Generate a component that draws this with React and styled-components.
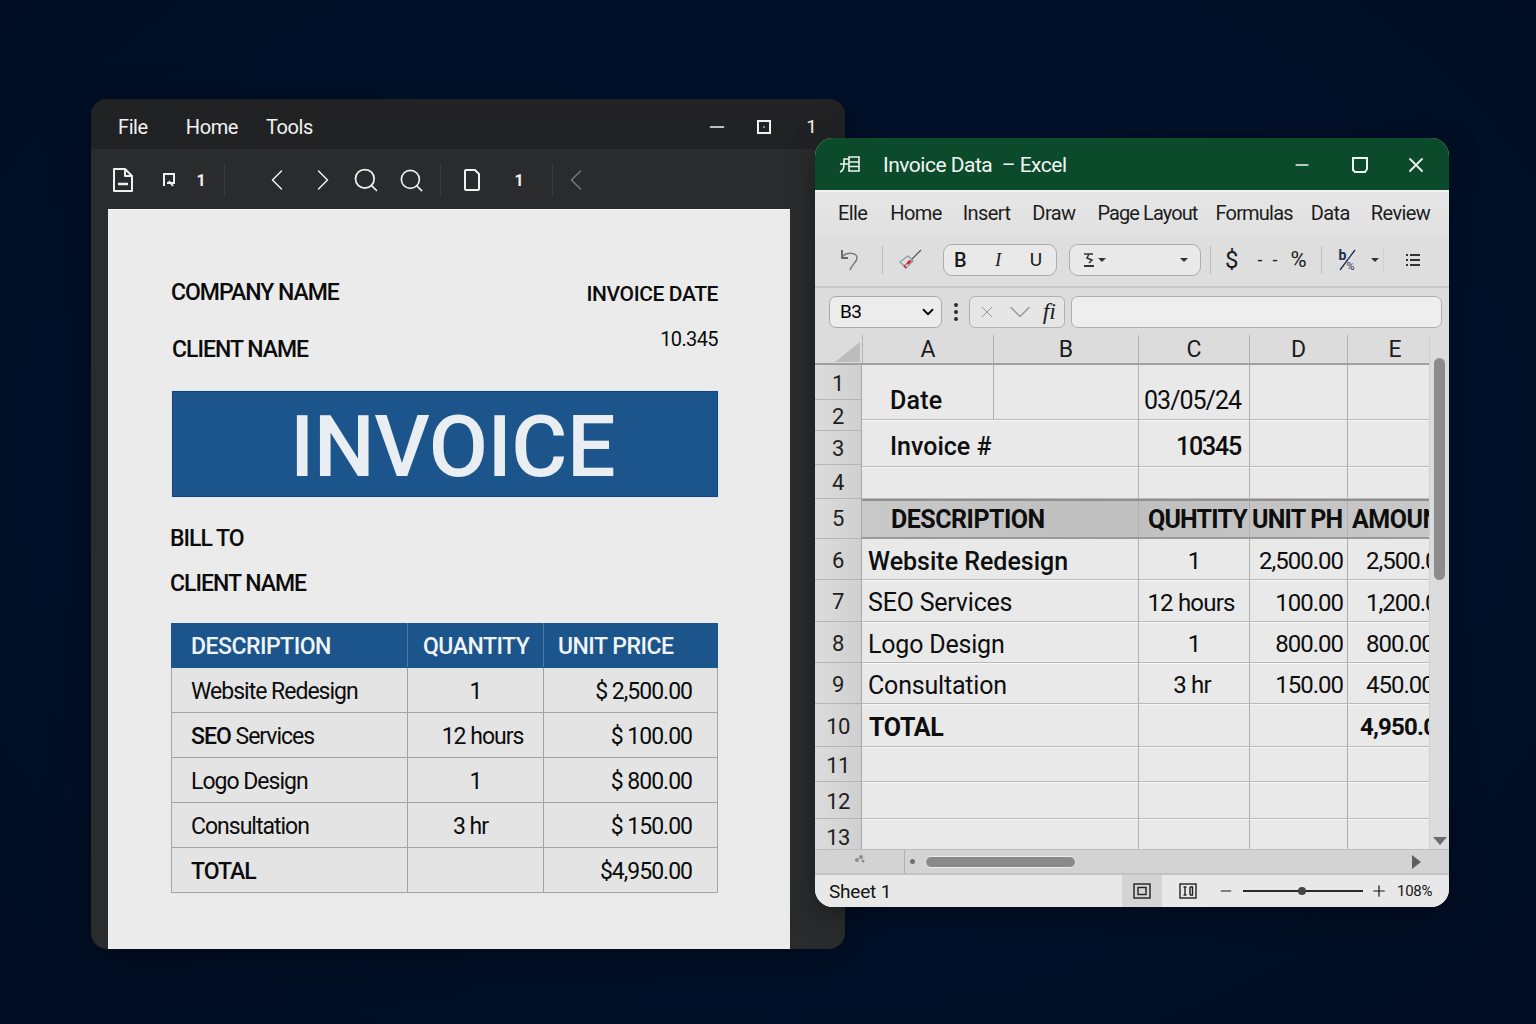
import React from "react";
import styled, { createGlobalStyle } from "styled-components";
import { ChevronLeft, ChevronRight, ChevronDown, Search, X, Minus, Plus } from "lucide-react";

const GlobalStyle = createGlobalStyle`
  html, body { margin: 0; padding: 0; background: #010f27; }
  * { box-sizing: border-box; }
  body { font-family: Roboto, "Noto Sans", sans-serif; }
`;

const Desktop = styled.div`
  position: relative;
  width: 1536px;
  height: 1024px;
  overflow: hidden;
  background: radial-gradient(ellipse at 50% 45%, #02122e 0%, #011029 60%, #000d22 100%);
`;

/* PDF viewer window */
const PdfWindow = styled.section`
  position: absolute;
  left: 91px;
  top: 99px;
  width: 754px;
  height: 850px;
  display: flex;
  flex-direction: column;
  background: #2a2b2d;
  border-radius: 16px;
  overflow: hidden;
  box-shadow: 0 10px 40px rgba(0, 0, 0, 0.35);
`;

const PdfTitleBar = styled.header`
  height: 50px;
  flex: none;
  display: flex;
  align-items: center;
  padding: 5px 28px 0 27px;
  background: #212224;
  color: #f2f2f2;
`;

const PdfMenu = styled.span`
  font-size: 20px;
  letter-spacing: -0.4px;
  margin-right: ${(p) => p.$gap}px;
`;

const Spacer = styled.div`
  flex: ${(p) => (p.$w ? "none" : 1)};
  width: ${(p) => (p.$w ? `${p.$w}px` : "auto")};
`;

const WindowControls = styled.div`
  display: flex;
  align-items: center;
  gap: ${(p) => p.$gap}px;
  color: #f2f2f2;
  font-size: 19px;
`;

const PdfToolbar = styled.div`
  height: 60px;
  flex: none;
  display: flex;
  align-items: center;
  padding: 2px 0 0 20px;
  color: #f0f0f0;
  font-size: 16px;
  font-weight: 700;
`;

const ToolSlot = styled.span`
  display: inline-flex;
  align-items: center;
  justify-content: center;
  flex: none;
  width: ${(p) => p.$w}px;
  margin-left: ${(p) => p.$ml || 0}px;
  color: ${(p) => p.$color || "inherit"};
  & > svg { flex: none; }
`;

const ToolDivider = styled.span`
  width: 1px;
  height: 30px;
  flex: none;
  margin-left: ${(p) => p.$ml || 0}px;
  background: #3b3c3e;
`;

const DocSheet = styled.main`
  flex: 1;
  margin: 0 55px 0 17px;
  padding: 69px 72px 0 63px;
  background: #ebebeb;
  color: #0c0c0c;
  border-top: 1px solid #f7f7f7;
`;

const DocHeader = styled.div`
  display: flex;
  justify-content: space-between;
  height: 112px;
`;

const DocColumn = styled.div`
  display: flex;
  flex-direction: column;
  align-items: ${(p) => (p.$right ? "flex-end" : "flex-start")};
`;

const DocLabel = styled.div`
  font-size: ${(p) => p.$size || 23}px;
  font-weight: ${(p) => p.$weight || 500};
  line-height: 28px;
  letter-spacing: ${(p) => p.$track ?? -1}px;
  margin-top: ${(p) => p.$top || 0}px;
  margin-left: ${(p) => p.$left || 0}px;
  white-space: nowrap;
`;

const InvoiceBanner = styled.div`
  height: 106px;
  margin-left: 1px;
  display: flex;
  align-items: center;
  justify-content: center;
  padding: 4px 0 0 15px;
  background: #1c548c;
  border: 1px solid #15457a;
  box-shadow: 0 0 0 1px #dfe6ec;
  color: #e8eef1;
  font-size: 86px;
  font-weight: 500;
  letter-spacing: -0.5px;
`;

const BillBlock = styled.div`
  margin: 28px 0 25px -1px;
  display: flex;
  flex-direction: column;
  gap: 17px;
`;

const InvoiceTable = styled.table`
  width: 546px;
  border-collapse: collapse;
  table-layout: fixed;
  font-size: 23px;
  letter-spacing: -0.5px;
`;

const HeadCell = styled.th`
  height: 44px;
  padding: 2px ${(p) => p.$pr || 0}px 0 ${(p) => p.$pl || 0}px;
  text-align: left;
  background: #1c548c;
  color: #f0f4f7;
  font-weight: 500;
  border: 1px solid #4d78a3;
  border-top-color: #1c548c;
  border-left-color: #1c548c;
  border-bottom-color: #1c548c;
  &:last-child { border-right-color: #1c548c; }
`;

const BodyCell = styled.td`
  height: 45px;
  padding: 2px ${(p) => p.$pr || 0}px 0 ${(p) => p.$pl || 0}px;
  text-align: ${(p) => p.$align || "left"};
  font-weight: ${(p) => p.$weight || 400};
  letter-spacing: -1px;
  background: #e4e4e4;
  border: 1px solid #a4a4a4;
  white-space: nowrap;
`;

const Strong = styled.span`
  font-weight: 500;
`;

/* Excel window */
const ExcelWindow = styled.section`
  position: absolute;
  left: 815px;
  top: 138px;
  width: 634px;
  height: 769px;
  display: flex;
  flex-direction: column;
  background: #e2e2e2;
  border-radius: 18px;
  overflow: hidden;
  box-shadow: 0 8px 30px rgba(0, 0, 0, 0.35);
`;

const ExcelTitleBar = styled.header`
  height: 52px;
  flex: none;
  display: flex;
  align-items: center;
  padding: 1px 21px 0 24px;
  background: #0c4a2c;
  color: #f1f6f3;
  font-size: 21px;
  letter-spacing: -0.5px;
`;

const ExcelTitle = styled.span`
  margin-left: 22px;
  white-space: pre;
`;

const ExcelMenu = styled.nav`
  height: 48px;
  flex: none;
  display: flex;
  align-items: center;
  padding: 0 0 4px 23px;
  background: linear-gradient(#e6e6e6, #e0e0e0);
  border-top: 2px solid #f2f2f2;
  color: #1c1c1c;
  font-size: 20px;
  letter-spacing: -0.6px;
  white-space: nowrap;
`;

const ExcelMenuItem = styled.span`
  margin-right: ${(p) => p.$gap}px;
  letter-spacing: ${(p) => p.$track ?? -0.6}px;
`;

const ExcelToolbar = styled.div`
  height: 50px;
  flex: none;
  display: flex;
  align-items: center;
  padding-bottom: 5px;
  background: #dedede;
  border-bottom: 2px solid #c9c9c9;
  color: #1c1c1c;
`;

const PillGroup = styled.div`
  width: ${(p) => p.$w}px;
  height: 32px;
  flex: none;
  display: flex;
  align-items: center;
  justify-content: space-between;
  padding: 0 ${(p) => p.$padR}px 0 ${(p) => p.$padL}px;
  background: #e9e9e9;
  border: 1px solid #adadad;
  border-radius: 9px;
  font-size: 19px;
`;

const Glyph = styled.span`
  font-size: ${(p) => p.$size || 18}px;
  font-weight: ${(p) => p.$weight || 400};
  font-style: ${(p) => (p.$italic ? "italic" : "normal")};
  font-family: ${(p) => (p.$serif ? '"Liberation Serif", serif' : "inherit")};
  color: ${(p) => p.$color || "inherit"};
  margin: ${(p) => p.$margin || 0};
`;

const Caret = styled.span`
  width: 0;
  height: 0;
  flex: none;
  margin: ${(p) => p.$margin || 0};
  border-left: 4px solid transparent;
  border-right: 4px solid transparent;
  border-top: 4px solid #333;
`;

const ToolRule = styled.span`
  width: 1px;
  height: 28px;
  flex: none;
  background: ${(p) => p.$color || "#bdbdbd"};
  margin: ${(p) => p.$margin || "0"};
`;

const FormulaBar = styled.div`
  height: 47px;
  flex: none;
  display: flex;
  align-items: center;
  padding: 0 7px 0 14px;
  background: #dcdcdc;
`;

const NameBox = styled.div`
  width: 113px;
  height: 32px;
  flex: none;
  display: flex;
  align-items: center;
  justify-content: space-between;
  padding: 0 4px 0 10px;
  background: #ececec;
  border: 1px solid #a9a9a9;
  border-radius: 7px;
  font-size: 19px;
  letter-spacing: -0.5px;
`;

const Dots = styled.div`
  width: 27px;
  flex: none;
  display: flex;
  flex-direction: column;
  align-items: center;
  gap: 3px;
  & > i {
    width: 4px;
    height: 4px;
    border-radius: 50%;
    background: #2c2c2c;
  }
`;

const FormulaTools = styled.div`
  width: 96px;
  height: 32px;
  flex: none;
  display: flex;
  align-items: center;
  justify-content: space-between;
  padding: 0 8px 0 7px;
  background: #e6e6e6;
  border: 1px solid #b1b1b1;
  border-radius: 6px;
  color: #9a9a9a;
`;

const FormulaInput = styled.div`
  flex: 1;
  height: 32px;
  margin-left: 6px;
  background: #eeeeee;
  border: 1px solid #aeaeae;
  border-radius: 7px;
`;

const SheetArea = styled.div`
  flex: 1;
  min-height: 0;
  display: flex;
  overflow: hidden;
`;

const SheetMain = styled.div`
  width: 614px;
  flex: none;
  display: flex;
  flex-direction: column;
`;

const ColumnHeader = styled.div`
  height: 30px;
  flex: none;
  display: grid;
  grid-template-columns: 47px 131px 145px 111px 98px 82px;
  background: #dcdcdc;
  border-bottom: 2px solid #a0a0a0;
  font-size: 23px;
  line-height: 1;
  color: #1c1c1c;
`;

const ColumnLabel = styled.div`
  display: flex;
  align-items: center;
  justify-content: center;
  padding: 1px 0 0 ${(p) => p.$pl || 0}px;
  border-left: 1px solid #b2b2b2;
`;

const Corner = styled.div`
  display: flex;
  align-items: flex-end;
  justify-content: flex-end;
  padding: 0 1px 1px 0;
`;

const SheetBody = styled.div`
  flex: 1;
  min-height: 0;
  display: flex;
  overflow: hidden;
`;

const RowHeaders = styled.div`
  width: 47px;
  flex: none;
  display: flex;
  flex-direction: column;
  background: linear-gradient(90deg, #dcdcdc, #cfcfcf);
  border-right: 1px solid #a9a9a9;
`;

const RowHeader = styled.div`
  height: ${(p) => p.$h}px;
  flex: none;
  display: flex;
  align-items: center;
  justify-content: center;
  padding-top: ${(p) => p.$nudge}px;
  font-size: 22px;
  line-height: 1;
  letter-spacing: -0.6px;
  color: #1f1f1f;
  border-bottom: 1px solid #b5b5b5;
  &:last-child { border-bottom: 0; }
`;

const Cells = styled.div`
  flex: 1;
  min-width: 0;
  display: flex;
  flex-direction: column;
  background: #e9e9e9;
  overflow: hidden;
`;

const Row = styled.div`
  height: ${(p) => p.$h}px;
  flex: none;
  display: grid;
  grid-template-columns: 277px 111px 98px 81px;
  background: ${(p) => (p.$head ? "linear-gradient(90deg, #c9c9c9, #bfbfbf 40%, #c8c8c8)" : "none")};
  border-top: ${(p) => (p.$head ? "2px solid #8f8f8f" : "0")};
  border-bottom: ${(p) => (p.$head ? "2px solid #9a9a9a" : p.$last ? "0" : "1px solid #b9b9b9")};
  box-shadow: ${(p) => (p.$head || p.$last ? "none" : "0 1px 0 #f7f7f7")};
`;

const Cell = styled.div`
  display: flex;
  align-items: center;
  justify-content: ${(p) => p.$justify || "flex-start"};
  min-width: 0;
  overflow: hidden;
  white-space: nowrap;
  padding: ${(p) => p.$nudge || 0}px ${(p) => p.$pr || 0}px 0 ${(p) => p.$pl || 0}px;
  font-size: ${(p) => p.$size || 25}px;
  font-weight: ${(p) => p.$weight || 400};
  letter-spacing: ${(p) => p.$track ?? -0.3}px;
  color: #0e0e0e;
  border-right: 1px solid #b0b0b0;
  &:last-child { border-right: 0; }
`;

const DateSplit = styled.div`
  display: grid;
  grid-template-columns: 132px 145px;
  & > div:last-child { border-right: 1px solid #b0b0b0; }
`;

const VerticalScroll = styled.aside`
  width: 20px;
  flex: none;
  position: relative;
  background: #dcdcdc;
  border-left: 1px solid #cfcfcf;
`;

const ScrollThumb = styled.div`
  position: absolute;
  left: 4px;
  top: 23px;
  width: 11px;
  height: 222px;
  border-radius: 6px;
  background: #8c8c8c;
`;

const ScrollDown = styled.div`
  position: absolute;
  left: 3px;
  bottom: 4px;
  width: 0;
  height: 0;
  border-left: 7px solid transparent;
  border-right: 7px solid transparent;
  border-top: 8px solid #6c6c6c;
`;

const HorizontalScroll = styled.div`
  height: 26px;
  flex: none;
  display: flex;
  align-items: center;
  background: #d3d3d3;
  border-top: 1px solid #bdbdbd;
  border-bottom: 2px solid #c2c2c2;
`;

const SheetTabHandle = styled.div`
  width: 90px;
  height: 100%;
  flex: none;
  display: flex;
  align-items: center;
  justify-content: center;
  padding-bottom: 5px;
  border-right: 1px solid #b0b0b0;
`;

const ScrollDot = styled.span`
  width: 5px;
  height: 5px;
  margin: 0 10px 0 5px;
  flex: none;
  border-radius: 50%;
  background: #717171;
`;

const HThumb = styled.div`
  width: 151px;
  height: 12px;
  flex: none;
  border-radius: 6px;
  background: #8a8a8a;
  border: 1px solid #ececec;
`;

const ScrollRight = styled.div`
  width: 0;
  height: 0;
  margin-right: 28px;
  border-top: 7px solid transparent;
  border-bottom: 7px solid transparent;
  border-left: 9px solid #5e5e5e;
`;

const StatusBar = styled.footer`
  height: 32px;
  flex: none;
  display: flex;
  align-items: center;
  padding: 0 15px 0 14px;
  background: #e8e8e8;
  color: #151515;
`;

const SheetName = styled.span`
  font-size: 19px;
  letter-spacing: -0.2px;
`;

const ViewButton = styled.div`
  width: 40px;
  height: 100%;
  flex: none;
  display: flex;
  align-items: center;
  justify-content: center;
  margin-right: ${(p) => p.$mr || 0}px;
  background: ${(p) => (p.$active ? "#d4d4d4" : "transparent")};
`;

const ZoomTrack = styled.div`
  position: relative;
  width: 120px;
  height: 2px;
  margin: 0 7px 0 9px;
  flex: none;
  background: #2a2a2a;
`;

const ZoomKnob = styled.span`
  position: absolute;
  left: 55px;
  top: -3px;
  width: 8px;
  height: 8px;
  border-radius: 50%;
  background: #444;
`;

const ZoomValue = styled.span`
  width: 37px;
  flex: none;
  margin-left: 9px;
  font-size: 15px;
  letter-spacing: -0.3px;
  white-space: nowrap;
`;

const OneLabel = styled.span`
  margin-left: 6px;
`;

const FractionMark = styled.span`
  position: relative;
  width: 20px;
  height: 24px;
  flex: none;
  color: #1d2d52;
  line-height: 1;
`;

const FractionBase = styled.span`
  position: absolute;
  left: ${(p) => p.$x}px;
  top: ${(p) => p.$y}px;
  font-size: ${(p) => p.$size}px;
  font-weight: ${(p) => p.$weight || 400};
`;

const DocIcon = () => (
  <svg width="24" height="26" viewBox="0 0 24 26" fill="none" stroke="#f0f0f0" strokeWidth="2" strokeLinejoin="round">
    <path d="M3 2h11l7 7v15H3z" />
    <path d="M14 2v7h7" />
    <path d="M7 17h10" strokeWidth="2.4" />
  </svg>
);

const SmallMark = () => (
  <svg width="14" height="16" viewBox="0 0 14 16" fill="none" stroke="#f0f0f0" strokeWidth="2">
    <path d="M2 14V2h10v9H5" />
    <path d="M7 9l4 5" />
  </svg>
);

const PageIcon = () => (
  <svg width="18" height="24" viewBox="0 0 18 24" fill="none" stroke="#f0f0f0" strokeWidth="2" strokeLinejoin="round">
    <path d="M2 3a1 1 0 0 1 1-1h9l4 4v15a1 1 0 0 1-1 1H3a1 1 0 0 1-1-1z" />
  </svg>
);

const RestoreIcon = () => (
  <svg width="14" height="16" viewBox="0 0 14 16" fill="none" stroke="#f0f0f0" strokeWidth="2">
    <rect x="1" y="2" width="12" height="12" />
    <path d="M7 7v2" strokeWidth="1" />
  </svg>
);

const SheetIcon = () => (
  <svg width="22" height="20" viewBox="0 0 22 20" fill="none" stroke="#eef4f0" strokeWidth="1.6">
    <path d="M1 17c3-1 4-4 4-8V4h5" />
    <path d="M1 9h9" />
    <path d="M10 2h10v14H10z" />
    <path d="M10 7h10M10 11.500h10" />
  </svg>
);

const MaxIcon = () => (
  <svg width="16" height="18" viewBox="0 0 16 18" fill="none" stroke="#f1f6f3" strokeWidth="2">
    <path d="M1 2h14v11l-2 3H3l-2-2z" />
  </svg>
);

const UndoIcon = () => (
  <svg width="22" height="24" viewBox="0 0 22 24" fill="none" stroke="#444" strokeWidth="1.5">
    <path d="M3 2v8h6" />
    <path d="M3 9c4-5 15-5 15 1 0 4-5 6-7 12" stroke="#777" />
  </svg>
);

const BrushIcon = () => (
  <svg width="24" height="22" viewBox="0 0 24 22" fill="none">
    <path d="M13 11L23 1" stroke="#555" strokeWidth="1.2" />
    <path d="M2 13l8-6 5 5-7 7z" stroke="#8da3a8" strokeWidth="1.4" />
    <path d="M7 16l4-5 3 1-3 3z" fill="#d3232e" />
    <path d="M8 19l-2-3" stroke="#d3232e" strokeWidth="1.6" />
  </svg>
);

const FontColorIcon = () => (
  <svg width="14" height="16" viewBox="0 0 14 16" fill="none" stroke="#333" strokeWidth="1.5">
    <path d="M2 2h9M7 2l-2 4 5 2-3 3" />
    <path d="M2 14h10" strokeWidth="2" />
  </svg>
);

const FractionSlash = () => (
  <svg width="20" height="24" viewBox="0 0 20 24" stroke="#1d2d52" strokeWidth="1.3">
    <path d="M2 22L17 2" />
  </svg>
);

const ListIcon = () => (
  <svg width="16" height="16" viewBox="0 0 16 16" stroke="#333" strokeWidth="2" fill="none">
    <path d="M5 3h10M5 8h10M5 13h10" />
    <path d="M1 3h2M1 8h2M1 13h2" strokeWidth="2" />
  </svg>
);

const CornerMark = () => (
  <svg width="26" height="20" viewBox="0 0 26 20">
    <path d="M25 0v20H0z" fill="#bcbcbc" />
  </svg>
);

const NormalViewIcon = () => (
  <svg width="18" height="16" viewBox="0 0 18 16" fill="none" stroke="#222" strokeWidth="1.4">
    <rect x="1" y="1" width="16" height="14" />
    <rect x="5" y="4.500" width="8" height="7" />
  </svg>
);

const PageViewIcon = () => (
  <svg width="18" height="16" viewBox="0 0 18 16" fill="none" stroke="#222" strokeWidth="1.4">
    <rect x="1" y="1" width="16" height="14" />
    <path d="M6 4v8M4.500 4h3M4.500 12h3M11 4v8M11 4h2.500v8H11" />
  </svg>
);

const SmudgeIcon = () => (
  <svg width="12" height="10" viewBox="0 0 12 10" fill="#8a8a8a">
    <circle cx="3" cy="6" r="2" />
    <circle cx="7" cy="3" r="2" />
    <circle cx="9" cy="7" r="1.500" />
  </svg>
);

const tableRows = [
  { name: "Website Redesign", qty: "1", price: "$ 2,500.00" },
  { name: <><Strong>SEO</Strong> Services</>, qty: "12 hours", qtyLeft: 14, price: "$ 100.00" },
  { name: "Logo Design", qty: "1", price: "$ 800.00" },
  { name: "Consultation", qty: "3 hr", qtyRight: 10, price: "$ 150.00" },
  { name: "TOTAL", qty: "", price: "$4,950.00", total: true },
];

const rowNumbers = [
  [1, 35, 3], [2, 31, 3], [3, 34, 3], [4, 34, 3], [5, 40, 0], [6, 41, 3], [7, 42, 3],
  [8, 41, 3], [9, 41, 3], [10, 43, 3], [11, 35, 3], [12, 37, 3], [13, 30, 7],
];

const sheetRows = [
  { h: 41, a: "Website Redesign", b: "1", c: "2,500.00", d: "2,500.00", bold: true },
  { h: 42, a: "SEO Services", b: "12 hours", bRight: 6, c: "100.00", d: "1,200.00" },
  { h: 41, a: "Logo Design", b: "1", c: "800.00", d: "800.00" },
  { h: 41, a: "Consultation", b: "3 hr", bRight: 4, c: "150.00", d: "450.00" },
];

const menuItems = [
  { label: "Elle", gap: 23 },
  { label: "Home", gap: 21 },
  { label: "Insert", gap: 22 },
  { label: "Draw", gap: 22 },
  { label: "Page Layout", gap: 18, track: -0.9 },
  { label: "Formulas", gap: 18, track: -0.8 },
  { label: "Data", gap: 21 },
  { label: "Review", gap: 0 },
];

const BlankRow = ({ h, last }) => (
  <Row $h={h} $last={last}>
    <Cell /><Cell /><Cell /><Cell />
  </Row>
);

export default function App() {
  return (
    <Desktop>
      <GlobalStyle />

      <PdfWindow>
        <PdfTitleBar>
          <PdfMenu $gap={38}>File</PdfMenu>
          <PdfMenu $gap={28}>Home</PdfMenu>
          <PdfMenu $gap={0}>Tools</PdfMenu>
          <Spacer />
          <WindowControls $gap={29}>
            <Minus size={22} strokeWidth={1.9} />
            <RestoreIcon />
            <OneLabel>1</OneLabel>
          </WindowControls>
        </PdfTitleBar>

        <PdfToolbar>
          <ToolSlot $w={24}><DocIcon /></ToolSlot>
          <ToolSlot $w={20} $ml={24}><SmallMark /></ToolSlot>
          <ToolSlot $w={14} $ml={15}>1</ToolSlot>
          <ToolDivider $ml={16} />
          <ToolSlot $w={24} $ml={40}><ChevronLeft size={36} strokeWidth={1} /></ToolSlot>
          <ToolSlot $w={24} $ml={22}><ChevronRight size={36} strokeWidth={1} /></ToolSlot>
          <ToolSlot $w={26} $ml={18}><Search size={28} strokeWidth={1.5} /></ToolSlot>
          <ToolSlot $w={24} $ml={20}><Search size={27} strokeWidth={1.5} /></ToolSlot>
          <ToolDivider $ml={17} />
          <ToolSlot $w={18} $ml={22}><PageIcon /></ToolSlot>
          <ToolSlot $w={14} $ml={31}>1</ToolSlot>
          <ToolDivider $ml={26} />
          <ToolSlot $w={24} $ml={11} $color="#77787a"><ChevronLeft size={36} strokeWidth={1} /></ToolSlot>
        </PdfToolbar>

        <DocSheet>
          <DocHeader>
            <DocColumn>
              <DocLabel>COMPANY NAME</DocLabel>
              <DocLabel $top={29} $left={1}>CLIENT NAME</DocLabel>
            </DocColumn>
            <DocColumn $right>
              <DocLabel $size={21} $top={1} $track={-0.4}>INVOICE DATE</DocLabel>
              <DocLabel $size={20} $weight={400} $top={17} $track={-0.6}>10.345</DocLabel>
            </DocColumn>
          </DocHeader>

          <InvoiceBanner>INVOICE</InvoiceBanner>

          <BillBlock>
            <DocLabel>BILL TO</DocLabel>
            <DocLabel>CLIENT NAME</DocLabel>
          </BillBlock>

          <InvoiceTable>
            <colgroup>
              <col style={{ width: 236 }} />
              <col style={{ width: 136 }} />
              <col style={{ width: 174 }} />
            </colgroup>
            <thead>
              <tr>
                <HeadCell $pl={19}>DESCRIPTION</HeadCell>
                <HeadCell $pl={15}>QUANTITY</HeadCell>
                <HeadCell $pl={14}>UNIT PRICE</HeadCell>
              </tr>
            </thead>
            <tbody>
              {tableRows.map((row) => (
                <tr key={row.price}>
                  <BodyCell $pl={19} $weight={row.total ? 500 : 400}>{row.name}</BodyCell>
                  <BodyCell $align="center" $pl={row.qtyLeft} $pr={row.qtyRight}>{row.qty}</BodyCell>
                  <BodyCell $align="right" $pr={25}>{row.price}</BodyCell>
                </tr>
              ))}
            </tbody>
          </InvoiceTable>
        </DocSheet>
      </PdfWindow>

      <ExcelWindow>
        <ExcelTitleBar>
          <SheetIcon />
          <ExcelTitle>Invoice Data  – Excel</ExcelTitle>
          <Spacer />
          <WindowControls $gap={36}>
            <Minus size={20} strokeWidth={2} />
            <ToolSlot $w={16} $ml={4}><MaxIcon /></ToolSlot>
            <X size={24} strokeWidth={1.8} />
          </WindowControls>
        </ExcelTitleBar>

        <ExcelMenu>
          {menuItems.map((item) => (
            <ExcelMenuItem key={item.label} $gap={item.gap} $track={item.track}>{item.label}</ExcelMenuItem>
          ))}
        </ExcelMenu>

        <ExcelToolbar>
          <ToolSlot $w={24} $ml={23}><UndoIcon /></ToolSlot>
          <ToolRule $margin="0 14px 0 20px" />
          <ToolSlot $w={26}><BrushIcon /></ToolSlot>
          <Spacer $w={20} />
          <PillGroup $w={114} $padL={10} $padR={14}>
            <Glyph $size={20} $weight={500}>B</Glyph>
            <Glyph $size={19} $italic $serif>I</Glyph>
            <Glyph $size={19}>U</Glyph>
          </PillGroup>
          <Spacer $w={12} />
          <PillGroup $w={132} $padL={12} $padR={12}>
            <FontColorIcon />
            <Caret $margin="0 0 0 -72px" />
            <Caret />
          </PillGroup>
          <ToolRule $margin="0 14px 0 9px" />
          <Glyph $size={24}>$</Glyph>
          <Glyph $size={18} $margin="0 10px 0 19px">-</Glyph>
          <Glyph $size={18} $margin="0 13px 0 0">-</Glyph>
          <Glyph $size={22}>%</Glyph>
          <ToolRule $margin="0 16px 0 14px" />
          <FractionMark>
            <FractionSlash />
            <FractionBase $x={1} $y={0} $size={14} $weight={700}>b</FractionBase>
            <FractionBase $x={9} $y={13} $size={11}>%</FractionBase>
          </FractionMark>
          <Caret $margin="0 0 0 13px" />
          <ToolRule $margin="0 21px 0 4px" $color="#d2d2d2" />
          <ListIcon />
        </ExcelToolbar>

        <FormulaBar>
          <NameBox>B3 <ChevronDown size={18} strokeWidth={2.4} /></NameBox>
          <Dots><i /><i /><i /></Dots>
          <FormulaTools>
            <X size={20} strokeWidth={1.2} />
            <ChevronDown size={36} strokeWidth={1} style={{ margin: "0 -6px" }} />
            <Glyph $size={24} $italic $serif $color="#222">fi</Glyph>
          </FormulaTools>
          <FormulaInput />
        </FormulaBar>

        <SheetArea>
          <SheetMain>
            <ColumnHeader>
              <Corner><CornerMark /></Corner>
              <ColumnLabel>A</ColumnLabel>
              <ColumnLabel>B</ColumnLabel>
              <ColumnLabel>C</ColumnLabel>
              <ColumnLabel>D</ColumnLabel>
              <ColumnLabel $pl={13}>E</ColumnLabel>
            </ColumnHeader>
            <SheetBody>
              <RowHeaders>
                {rowNumbers.map(([n, h, nudge]) => <RowHeader key={n} $h={h} $nudge={nudge}>{n}</RowHeader>)}
              </RowHeaders>
              <Cells>
                <Row $h={55}>
                  <DateSplit>
                    <Cell $pl={28} $nudge={16} $weight={500} $track={0.2}>Date</Cell>
                    <Cell />
                  </DateSplit>
                  <Cell $justify="flex-end" $pr={8} $nudge={16} $track={-1}>03/05/24</Cell>
                  <Cell /><Cell />
                </Row>
                <Row $h={47}>
                  <Cell $pl={28} $nudge={6} $weight={500} $track={0}>Invoice #</Cell>
                  <Cell $justify="flex-end" $pr={8} $nudge={6} $weight={500} $track={-1.2}>10345</Cell>
                  <Cell /><Cell />
                </Row>
                <BlankRow h={32} />
                <Row $h={40} $head>
                  <Cell $pl={29} $weight={700} $track={-0.5}>DESCRIPTION</Cell>
                  <Cell $pl={9} $weight={700} $track={-0.8}>QUHTITY</Cell>
                  <Cell $pl={2} $weight={700} $track={-0.8}>UNIT PH</Cell>
                  <Cell $pl={4} $weight={700} $track={-0.5}>AMOUNT</Cell>
                </Row>
                {sheetRows.map((row) => (
                  <Row key={row.a} $h={row.h}>
                    <Cell $pl={6} $nudge={4} $weight={row.bold ? 500 : 400} $track={row.bold ? 0 : -0.2}>{row.a}</Cell>
                    <Cell $justify="center" $nudge={4} $pr={row.bRight} $size={24} $track={-0.8}>{row.b}</Cell>
                    <Cell $justify="flex-end" $nudge={4} $pr={4} $size={24} $track={-1}>{row.c}</Cell>
                    <Cell $pl={18} $nudge={4} $size={24} $track={-1}>{row.d}</Cell>
                  </Row>
                ))}
                <Row $h={43}>
                  <Cell $pl={7} $nudge={4} $weight={700} $track={-0.3}>TOTAL</Cell>
                  <Cell /><Cell />
                  <Cell $pl={12} $nudge={4} $size={24} $weight={700} $track={-0.8}>4,950.00</Cell>
                </Row>
                <BlankRow h={35} />
                <BlankRow h={37} />
                <BlankRow h={30} last />
              </Cells>
            </SheetBody>
          </SheetMain>
          <VerticalScroll>
            <ScrollThumb />
            <ScrollDown />
          </VerticalScroll>
        </SheetArea>

        <HorizontalScroll>
          <SheetTabHandle><SmudgeIcon /></SheetTabHandle>
          <ScrollDot />
          <HThumb />
          <Spacer />
          <ScrollRight />
        </HorizontalScroll>

        <StatusBar>
          <SheetName>Sheet 1</SheetName>
          <Spacer />
          <ViewButton $active $mr={6}><NormalViewIcon /></ViewButton>
          <ViewButton $mr={10}><PageViewIcon /></ViewButton>
          <Minus size={16} strokeWidth={1.8} />
          <ZoomTrack><ZoomKnob /></ZoomTrack>
          <Plus size={18} strokeWidth={1.6} />
          <ZoomValue>108%</ZoomValue>
        </StatusBar>
      </ExcelWindow>
    </Desktop>
  );
}
